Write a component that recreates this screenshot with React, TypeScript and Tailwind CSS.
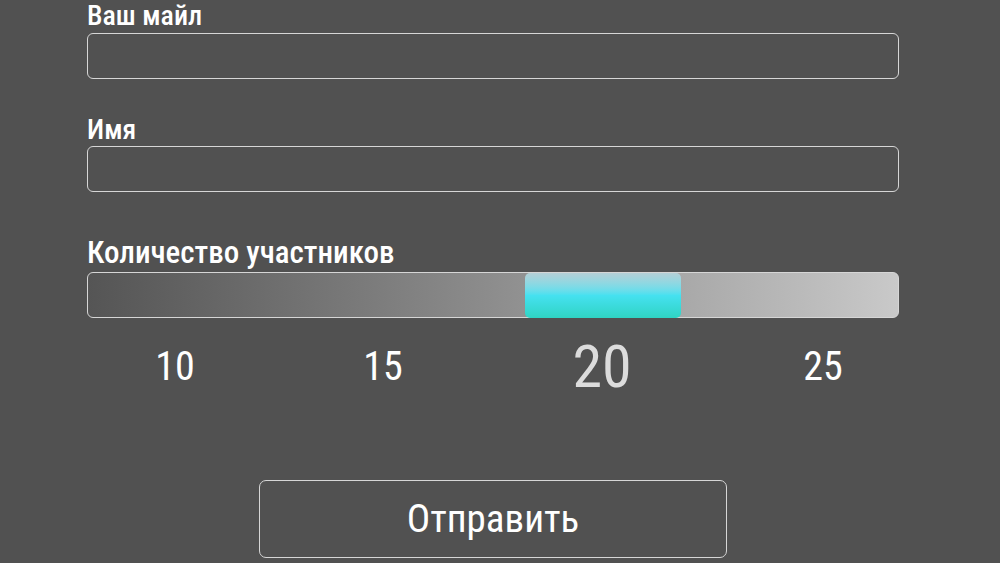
export default function App() {
  return (
    <div
      className="w-[1000px] h-[563px] overflow-hidden bg-[#515151] text-white"
      style={{ fontFamily: 'Roboto, "Liberation Sans", sans-serif' }}
    >
      <div className="w-[812px] ml-[87px]">
        <label className="block text-[28px] leading-[32px] font-medium font-stretch-condensed">Ваш майл</label>
        <div className="mt-[1px] h-[46px] rounded-[6px] border border-[#d6d6d6]" />

        <label className="block mt-[35px] text-[28px] leading-[32px] font-medium font-stretch-condensed">Имя</label>
        <div className="mt-0 h-[46px] rounded-[6px] border border-[#d6d6d6]" />

        <label className="block mt-[44px] text-[31px] leading-[34px] font-medium font-stretch-condensed">Количество участников</label>
        <div className="relative mt-[2px] h-[46px] rounded-[6px] border border-[#d6d6d6] bg-gradient-to-r from-[#555555] to-[#c9c9c9]">
          <div className="absolute left-[437px] top-0 w-[156px] h-[45px] rounded-[5px] bg-gradient-to-b from-[#b4cfd6] via-[#45e1f0] to-[#2fd4c3]" />
        </div>

        <div className="flex items-center h-[97px] font-stretch-condensed">
          <span className="ml-[38px] w-[100px] text-center text-[40px] leading-none">10</span>
          <span className="ml-[108px] w-[100px] text-center text-[40px] leading-none">15</span>
          <span className="ml-[119px] w-[100px] text-center text-[60px] leading-none text-[#dcdcdc]">20</span>
          <span className="ml-[121px] w-[100px] text-center text-[40px] leading-none">25</span>
        </div>
      </div>

      <button className="block mt-[65px] ml-[259px] w-[468px] h-[78px] rounded-[7px] border border-[#d6d6d6] text-[39px] font-stretch-condensed">
        Отправить
      </button>
    </div>
  );
}
